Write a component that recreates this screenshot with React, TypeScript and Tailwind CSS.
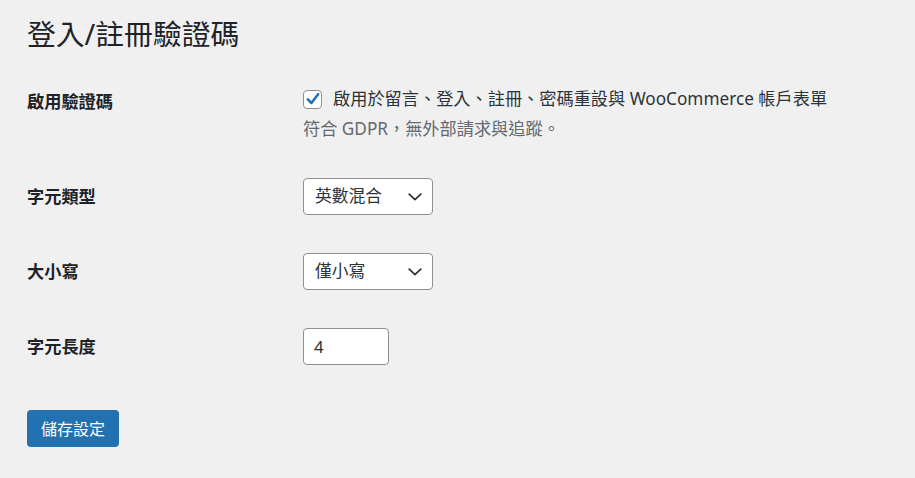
import React from "react";

const FONT = { fontFamily: '"Noto Sans", "Noto Sans CJK TC", sans-serif' };

function Chevron() {
  return (
    <svg width="14" height="8" viewBox="0 0 14 8" fill="none" className="absolute right-[10px] top-1/2 -translate-y-1/2">
      <path d="M1.2 1.2 L7 6.6 L12.8 1.2" stroke="#2c3338" strokeWidth="1.7" strokeLinecap="round" strokeLinejoin="round" />
    </svg>
  );
}

function Select({ value }: { value: string }) {
  return (
    <div className="relative w-[130px] h-[37px] bg-white border border-[#8c8f94] rounded-[4px] flex items-center pl-[11px] text-[16.8px] text-[#2c3338]">
      <span className="leading-none">{value}</span>
      <Chevron />
    </div>
  );
}

function Label({ children }: { children: React.ReactNode }) {
  return <div className="w-[276px] shrink-0 font-bold text-[17.2px] text-[#1d2327] leading-[26px]">{children}</div>;
}

export default function App() {
  return (
    <div className="min-h-[478px] w-full bg-[#f0f0f1] pl-[27px]" style={FONT}>
      <h1 className="pt-[16px] text-[28.8px] leading-[36px] font-normal text-[#1d2327]">登入/註冊驗證碼</h1>

      <div className="mt-[34px] flex">
        <div className="pt-[3px]">
          <Label>啟用驗證碼</Label>
        </div>
        <div>
          <div className="h-[26px] flex items-center gap-[11px] text-[17.2px] text-[#2c3338]">
            <div className="w-[19px] h-[19px] bg-white border border-[#8c8f94] rounded-[4px] flex items-center justify-center">
              <svg width="16" height="16" viewBox="0 0 20 20">
                <path d="M3.5 10.5 L8 15 L16.5 4" fill="none" stroke="#2271b1" strokeWidth="3.2" strokeLinecap="round" strokeLinejoin="round" />
              </svg>
            </div>
            <span className="leading-[26px]">啟用於留言、登入、註冊、密碼重設與 WooCommerce 帳戶表單</span>
          </div>
          <div className="mt-[4px] leading-[26px] text-[17.2px] text-[#646970]">符合 GDPR，無外部請求與追蹤。</div>
        </div>
      </div>

      <div className="mt-[36px] flex items-center">
        <Label>字元類型</Label>
        <Select value="英數混合" />
      </div>

      <div className="mt-[38px] flex items-center">
        <Label>大小寫</Label>
        <Select value="僅小寫" />
      </div>

      <div className="mt-[38px] flex items-center">
        <Label>字元長度</Label>
        <div className="w-[86px] h-[37px] bg-white border border-[#8c8f94] rounded-[4px] flex items-center pl-[10px] text-[16.8px] text-[#2c3338]">
          4
        </div>
      </div>

      <button className="mt-[45px] w-[92px] h-[37px] rounded-[4px] bg-[#2271b1] text-white text-[16px] flex items-center justify-center">
        儲存設定
      </button>
    </div>
  );
}
